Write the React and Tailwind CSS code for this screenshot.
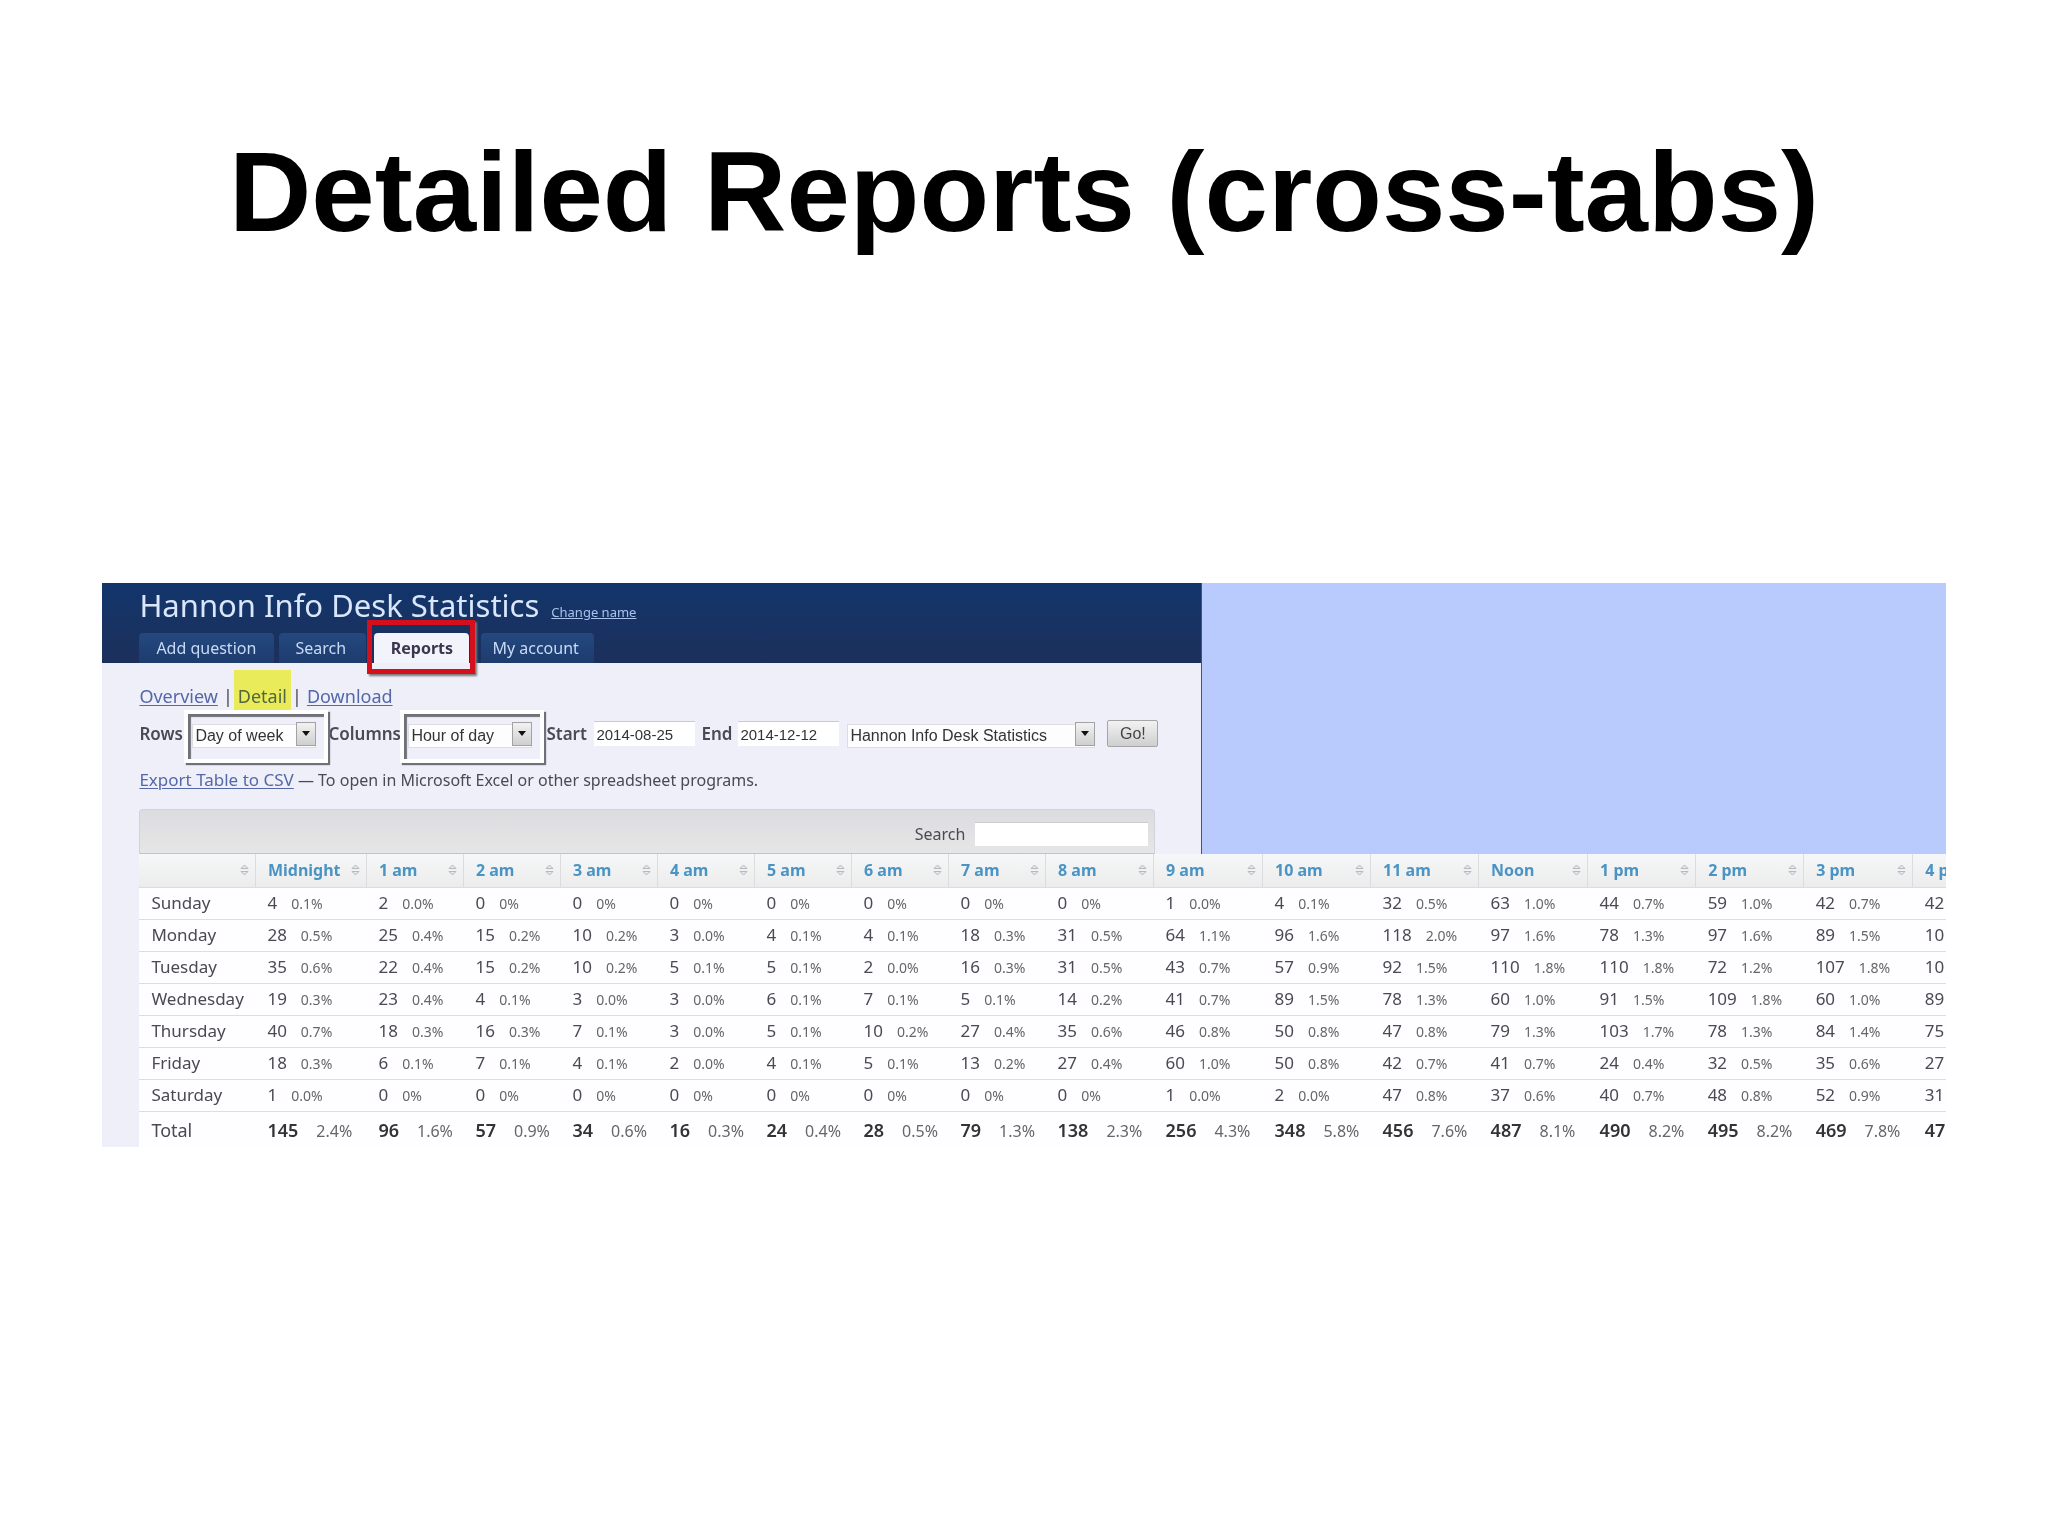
import React, { useState } from 'react';

const columns = [
  { label: 'Midnight', width: 'w-[111px]' },
  { label: '1 am', width: 'w-[97px]' },
  { label: '2 am', width: 'w-[97px]' },
  { label: '3 am', width: 'w-[97px]' },
  { label: '4 am', width: 'w-[97px]' },
  { label: '5 am', width: 'w-[97px]' },
  { label: '6 am', width: 'w-[97px]' },
  { label: '7 am', width: 'w-[97px]' },
  { label: '8 am', width: 'w-[108px]' },
  { label: '9 am', width: 'w-[109px]' },
  { label: '10 am', width: 'w-[108px]' },
  { label: '11 am', width: 'w-[108px]' },
  { label: 'Noon', width: 'w-[109px]' },
  { label: '1 pm', width: 'w-[108px]' },
  { label: '2 pm', width: 'w-[108px]' },
  { label: '3 pm', width: 'w-[109px]' },
  { label: '4 pm', width: 'w-[108px]' },
];

// "count percent" for every hour
const rows = [
  { day: 'Sunday', cells: ['4 0.1%', '2 0.0%', '0 0%', '0 0%', '0 0%', '0 0%', '0 0%', '0 0%', '0 0%', '1 0.0%', '4 0.1%', '32 0.5%', '63 1.0%', '44 0.7%', '59 1.0%', '42 0.7%', '42'] },
  { day: 'Monday', cells: ['28 0.5%', '25 0.4%', '15 0.2%', '10 0.2%', '3 0.0%', '4 0.1%', '4 0.1%', '18 0.3%', '31 0.5%', '64 1.1%', '96 1.6%', '118 2.0%', '97 1.6%', '78 1.3%', '97 1.6%', '89 1.5%', '10'] },
  { day: 'Tuesday', cells: ['35 0.6%', '22 0.4%', '15 0.2%', '10 0.2%', '5 0.1%', '5 0.1%', '2 0.0%', '16 0.3%', '31 0.5%', '43 0.7%', '57 0.9%', '92 1.5%', '110 1.8%', '110 1.8%', '72 1.2%', '107 1.8%', '10'] },
  { day: 'Wednesday', cells: ['19 0.3%', '23 0.4%', '4 0.1%', '3 0.0%', '3 0.0%', '6 0.1%', '7 0.1%', '5 0.1%', '14 0.2%', '41 0.7%', '89 1.5%', '78 1.3%', '60 1.0%', '91 1.5%', '109 1.8%', '60 1.0%', '89'] },
  { day: 'Thursday', cells: ['40 0.7%', '18 0.3%', '16 0.3%', '7 0.1%', '3 0.0%', '5 0.1%', '10 0.2%', '27 0.4%', '35 0.6%', '46 0.8%', '50 0.8%', '47 0.8%', '79 1.3%', '103 1.7%', '78 1.3%', '84 1.4%', '75'] },
  { day: 'Friday', cells: ['18 0.3%', '6 0.1%', '7 0.1%', '4 0.1%', '2 0.0%', '4 0.1%', '5 0.1%', '13 0.2%', '27 0.4%', '60 1.0%', '50 0.8%', '42 0.7%', '41 0.7%', '24 0.4%', '32 0.5%', '35 0.6%', '27'] },
  { day: 'Saturday', cells: ['1 0.0%', '0 0%', '0 0%', '0 0%', '0 0%', '0 0%', '0 0%', '0 0%', '0 0%', '1 0.0%', '2 0.0%', '47 0.8%', '37 0.6%', '40 0.7%', '48 0.8%', '52 0.9%', '31'] },
];

const totals = ['145 2.4%', '96 1.6%', '57 0.9%', '34 0.6%', '16 0.3%', '24 0.4%', '28 0.5%', '79 1.3%', '138 2.3%', '256 4.3%', '348 5.8%', '456 7.6%', '487 8.1%', '490 8.2%', '495 8.2%', '469 7.8%', '47'];

const SortIcon = () => (
  <svg viewBox="0 0 9 12" className="w-[9px] h-3 shrink-0" fill="#e4e7ea" stroke="#b4bac0" strokeWidth="1">
    <path d="M1 4.5 L4.5 1 L8 4.5 Z" />
    <path d="M1 7.5 L4.5 11 L8 7.5 Z" />
  </svg>
);

const SelectBox = ({ id, value, options, onChange, width }) => (
  <div className={`relative h-6 ${width}`}>
    <select
      id={id}
      value={value}
      onChange={(e) => onChange(e.target.value)}
      className="w-full h-full appearance-none bg-[#fdfdfd] border border-[#dcdce2] pl-[2px] pr-5 font-['Liberation_Sans',sans-serif] text-base leading-5 text-[#333] outline-none"
    >
      {options.map((o) => (
        <option key={o}>{o}</option>
      ))}
    </select>
    <span className="absolute right-0 top-0 w-5 h-6 border border-[#a2a2a2] bg-linear-to-b from-[#f2f2f2] to-[#cfcfcf] flex items-center justify-center pointer-events-none">
      <svg viewBox="0 0 8 5" className="w-2 h-[5px]" fill="#111">
        <path d="M0 0 H8 L4 5 Z" />
      </svg>
    </span>
  </div>
);

// White callout frame with a hard shadow, drawn over a control
const Frame = () => (
  <div className="absolute -left-2 -right-3 -top-3 -bottom-[17px] z-10 border-4 border-white shadow-[2px_2px_1px_#707078,inset_3px_3px_1px_#707078] pointer-events-none"></div>
);

const Stat = ({ value, total }) => {
  const [count, percent] = value.split(' ');
  return (
    <div className={`flex items-baseline ${total ? 'gap-[18px]' : 'gap-[14px]'}`}>
      <span className={total ? 'text-lg font-semibold text-[#333]' : ''}>{count}</span>
      {percent && <span className={total ? 'text-base text-[#666]' : 'text-sm text-[#666]'}>{percent}</span>}
    </div>
  );
};

const App = () => {
  const [rowField, setRowField] = useState('Day of week');
  const [colField, setColField] = useState('Hour of day');
  const [start, setStart] = useState('2014-08-25');
  const [end, setEnd] = useState('2014-12-12');
  const [desk, setDesk] = useState('Hannon Info Desk Statistics');
  const [search, setSearch] = useState('');

  const tab = 'h-[30px] flex items-center rounded-t-sm bg-linear-to-b from-[#24487f] to-[#1d3c6e] text-base text-[#c9daf5]';
  const link = 'text-[#5468a8] underline underline-offset-2';
  const dateInput = "w-[101px] h-[25px] bg-white border-t border-[#c9c9d2] pl-[2px] font-['Liberation_Sans',sans-serif] text-[15px] text-[#333] outline-none";

  return (
    <div className="min-h-screen bg-white">
      <h1 className="pt-[124px] text-center font-['Liberation_Sans',sans-serif] font-bold text-[114px] leading-[136px] text-black">
        Detailed Reports (cross-tabs)
      </h1>

      <section className="mt-[323px] mx-[5%] h-[564px] overflow-hidden bg-[#b9cafd] font-['Noto_Sans',sans-serif] text-[17px] text-[#4a4a50]">
        <div className="w-[1100px] h-full bg-[#eeeff9] border-r border-[#3f547f]">
          <header className="bg-linear-to-b from-[#11356b] to-[#1c305b] pt-1 pl-[37px]">
            <div className="flex items-baseline gap-3 h-[46px] leading-9">
              <h2 className="text-[31px] text-[#d9e6fb]">Hannon Info Desk Statistics</h2>
              <a href="#name" className="text-[13px] text-[#a9c2ec] underline">Change name</a>
            </div>
            <nav className="flex">
              <a href="#add" className={`${tab} w-[135px] pl-[17px] mr-[5px]`}>Add question</a>
              <a href="#search" className={`${tab} w-[87px] pl-4 mr-2`}>Search</a>
              <div className="relative mr-3">
                <a href="#reports" className="h-[30px] w-[95px] flex items-center justify-center rounded-t-sm bg-[#f3f3fb] text-base font-bold text-[#3c3550]">Reports</a>
                <div className="absolute -left-[7px] -right-[6px] -top-[13px] -bottom-[11px] border-[5px] border-[#d5101c] shadow-[2px_2px_2px_#777] pointer-events-none"></div>
              </div>
              <a href="#account" className={`${tab} w-[113px] pl-[11px]`}>My account</a>
            </nav>
          </header>

          <div className="pl-[37px]">
            <div className="pt-5 h-[57px] flex gap-[5px] text-lg leading-[26px]">
              <a href="#overview" className={link}>Overview</a>
              <span>|</span>
              <div className="relative">
                <a href="#detail" className="text-[#5468a8]">Detail</a>
                <div className="absolute -left-1 -right-1 -top-[13px] h-[42px] bg-[#fbfb5c] mix-blend-multiply"></div>
              </div>
              <span>|</span>
              <a href="#download" className={link}>Download</a>
            </div>

            <form className="flex items-center h-[27px] whitespace-nowrap" onSubmit={(e) => e.preventDefault()}>
              <label htmlFor="rows" className="w-[53px] font-semibold">Rows</label>
              <div className="relative mr-3">
                <SelectBox id="rows" value={rowField} options={['Day of week', 'Hour of day']} onChange={setRowField} width="w-[124px]" />
                <Frame />
              </div>
              <label htmlFor="cols" className="w-20 font-semibold">Columns</label>
              <div className="relative mr-[14px]">
                <SelectBox id="cols" value={colField} options={['Hour of day', 'Day of week']} onChange={setColField} width="w-[124px]" />
                <Frame />
              </div>
              <label htmlFor="start" className="w-[48px] font-semibold">Start</label>
              <input id="start" type="text" value={start} onChange={(e) => setStart(e.target.value)} className={dateInput} />
              <label htmlFor="end" className="w-[43px] pl-[6px] font-semibold">End</label>
              <input id="end" type="text" value={end} onChange={(e) => setEnd(e.target.value)} className={`${dateInput} mr-2`} />
              <SelectBox id="desk" value={desk} options={['Hannon Info Desk Statistics']} onChange={setDesk} width="w-[248px]" />
              <button type="submit" className="ml-3 w-[51px] h-[27px] rounded-xs border border-[#a5a5a5] bg-linear-to-b from-[#f2f2f2] to-[#cfcfcf] font-['Liberation_Sans',sans-serif] text-base text-[#444]">
                Go!
              </button>
            </form>

            <p className="h-[62px] pt-[21px] text-base leading-6">
              <a href="#csv" className={`${link} text-[17px]`}>Export Table to CSV</a> — To open in Microsoft Excel or other spreadsheet programs.
            </p>

            <div className="w-[1016px] h-[45px] flex items-center justify-end gap-[10px] pt-1 pr-[6px] rounded-t border border-b-[#c4c4c8] border-[#d2d2d8] bg-linear-to-b from-[#dcdce0] to-[#e6e6e6]">
              <label htmlFor="filter" className="text-base">Search</label>
              <input id="filter" type="text" value={search} onChange={(e) => setSearch(e.target.value)} className="w-[173px] h-6 bg-white border-t border-[#c9c9d2] px-1 outline-none" />
            </div>

            <table className="table-fixed w-[1882px] border-collapse bg-[#fefdff] text-left">
              <thead>
                <tr className="h-[33px] bg-linear-to-b from-[#f6f7f8] to-[#ececec]">
                  <th className="w-[116px] border-r border-b border-[#dcdce0] pr-[6px]">
                    <div className="flex justify-end"><SortIcon /></div>
                  </th>
                  {columns.map((c) => (
                    <th key={c.label} className={`${c.width} border-r border-b border-[#dcdce0] pl-3 pr-[6px] text-base leading-5 font-bold text-[#4a94c4]`}>
                      <div className="flex items-center justify-between">{c.label}<SortIcon /></div>
                    </th>
                  ))}
                </tr>
              </thead>
              <tbody>
                {rows.map((r) => (
                  <tr key={r.day} className="h-8 leading-6 border-b border-[#dedee2]">
                    <th className="pl-3 font-normal">{r.day}</th>
                    {r.cells.map((cell, i) => (
                      <td key={i} className="pl-3"><Stat value={cell} /></td>
                    ))}
                  </tr>
                ))}
              </tbody>
              <tfoot>
                <tr className="h-[37px] leading-7">
                  <th className="pl-3 text-lg font-normal">Total</th>
                  {totals.map((cell, i) => (
                    <td key={i} className="pl-3"><Stat value={cell} total /></td>
                  ))}
                </tr>
              </tfoot>
            </table>
          </div>
        </div>
      </section>
    </div>
  );
};

export default App;
